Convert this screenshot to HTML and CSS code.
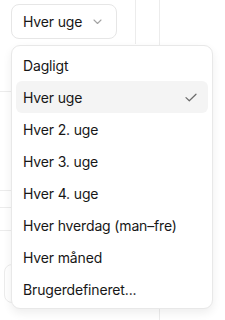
FILE: index.html
```html
<!DOCTYPE html>
<html lang="da">
<head>
<meta charset="utf-8">
<link rel="stylesheet" href="styles.css">
</head>
<body>
<div class="page">
  <div class="main">
    <div class="top">
      <button class="trigger">
        <span>Hver uge</span>
        <svg class="chev" width="9" height="6" viewBox="0 0 9 6"><path d="M1 1l3.5 3.5L8 1" fill="none" stroke="#a3a3a3" stroke-width="1.1" stroke-linecap="round" stroke-linejoin="round"/></svg>
      </button>
      <div class="cell"></div>
    </div>
    <div class="row r1"></div>
    <div class="row r2"></div>
    <div class="row r3"></div>
    <div class="row r4"></div>
    <div class="ghost"></div>
  </div>
</div>
<div class="menu" role="listbox">
  <div class="item">Dagligt</div>
  <div class="item selected">Hver uge
    <svg class="check" width="12" height="9" viewBox="0 0 12 9"><path d="M1 4.6l3.3 3.2L11 1.2" fill="none" stroke="#6b6b6b" stroke-width="1.2" stroke-linecap="round" stroke-linejoin="round"/></svg>
  </div>
  <div class="item">Hver 2. uge</div>
  <div class="item">Hver 3. uge</div>
  <div class="item">Hver 4. uge</div>
  <div class="item">Hver hverdag (man–fre)</div>
  <div class="item">Hver måned</div>
  <div class="item">Brugerdefineret...</div>
</div>
</body>
</html>
```
FILE: styles.css
```css
html, body {
  margin: 0;
  padding: 0;
}
body {
  width: 225px;
  height: 320px;
  overflow: hidden;
  position: relative;
  background: #fff;
  font-family: Inter, "Noto Sans", sans-serif;
  color: #171717;
}
.page {
  display: flex;
  height: 320px;
}
.main {
  width: 159px;
  border-right: 1px solid #ececec;
  display: flex;
  flex-direction: column;
}
.top {
  display: flex;
  height: 44px;
  flex: none;
}
.trigger {
  margin: 4px 0 0 11px;
  width: 106px;
  height: 35px;
  box-sizing: border-box;
  border: 1px solid #e6e6e6;
  border-radius: 8px;
  background: #fff;
  display: flex;
  align-items: center;
  padding: 0 0 0 11px;
  gap: 11px;
  font-family: inherit;
  font-size: 14px;
  letter-spacing: -0.15px;
  color: #171717;
}
.chev {
  margin-top: 1px;
}
.cell {
  margin-left: auto;
  width: 23px;
  border-left: 1px solid #ececec;
}
.row {
  flex: none;
  border-bottom: 1px solid #ececec;
}
.r1 { height: 47px; }
.r2 { height: 98px; }
.r3 { height: 16px; }
.r4 { height: 22px; }
.ghost {
  margin: 33px 0 0 4px;
  width: 60px;
  height: 37px;
  border: 1px solid #ececec;
  border-radius: 8px;
}
.menu {
  position: absolute;
  left: 11px;
  top: 45px;
  width: 202px;
  box-sizing: border-box;
  background: #fff;
  border: 1px solid #e8e8e8;
  border-radius: 9px;
  box-shadow: 0 4px 10px rgba(0, 0, 0, 0.07);
  padding: 3px 4px;
  display: flex;
  flex-direction: column;
}
.item {
  height: 32px;
  display: flex;
  align-items: center;
  padding: 0 11px 0 7px;
  border-radius: 6px;
  font-size: 14px;
  letter-spacing: -0.15px;
  color: #171717;
}
.item.selected {
  background: #f4f4f4;
  justify-content: space-between;
}
```
